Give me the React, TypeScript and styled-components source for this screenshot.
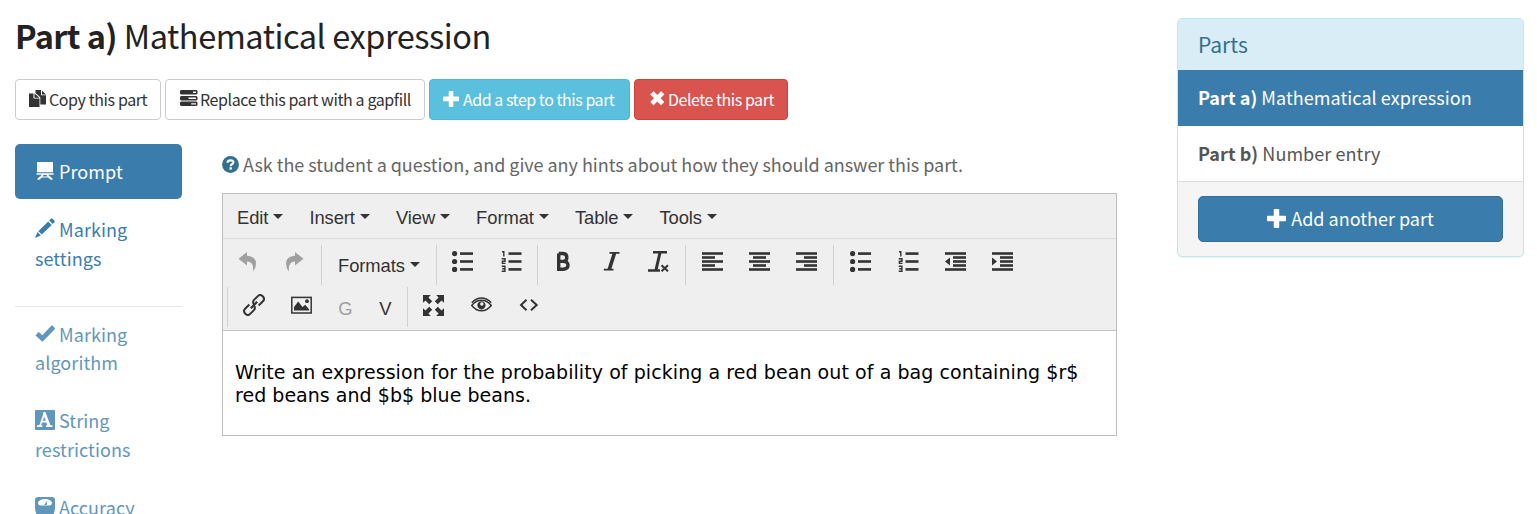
import React from "react";
import styled, { createGlobalStyle } from "styled-components";

const sans = `"Noto Sans CJK SC", "Noto Sans", sans-serif`;

const Global = createGlobalStyle`
  * { box-sizing: border-box; }
  html, body { margin: 0; background: #fff; }
  body { font-family: ${sans}; font-size: 18px; color: #333; overflow: hidden; }
`;

const Page = styled.div`
  display: flex;
  height: 514px;
  overflow: hidden;
  padding: 0 13px 0 15px;
  justify-content: space-between;
`;
const Main = styled.main`width: 1102px;`;
const Title = styled.h1`
  margin: 0;
  height: 79px;
  padding-top: 15px;
  font-size: 32.5px;
  line-height: 40px;
  font-weight: 400;
  color: #222;
  white-space: nowrap;
  letter-spacing: -0.45px;
  b { letter-spacing: -0.62px; }
`;
const Actions = styled.div`display: flex; gap: 4px; margin-bottom: 24px;`;
const tones = {
  plain: ["#fff", "#ccc", "#333"],
  info: ["#5bc0de", "#46b8da", "#fff"],
  danger: ["#d9534f", "#d43f3a", "#fff"],
};
const ActionButton = styled.button<{ $tone: keyof typeof tones; $w: number; $ls?: number; $gap?: number; $pad?: number }>`
  display: flex;
  align-items: center;
  width: ${(p) => p.$w}px;
  height: 41px;
  padding: 0 0 2px ${(p) => p.$pad ?? 13}px;
  font: 16px/24px ${sans};
  letter-spacing: ${(p) => p.$ls ?? -0.4}px;
  white-space: nowrap;
  border: 1px solid ${(p) => tones[p.$tone][1]};
  border-radius: 4px;
  background: ${(p) => tones[p.$tone][0]};
  color: ${(p) => tones[p.$tone][2]};
  svg { margin-right: ${(p) => p.$gap ?? 2}px; margin-top: 0; flex: none; }
`;
const Columns = styled.div`display: flex; gap: 40px;`;
const Nav = styled.nav`width: 167px; flex: none;`;
const NavItem = styled.a<{ $active?: boolean; $soft?: boolean }>`
  display: block;
  height: ${(p) => (p.$active ? 55 : 84.5)}px;
  margin-bottom: 2px;
  padding: ${(p) => (p.$active ? 13 : 14)}px 20px;
  border-radius: 5px;
  line-height: 28.6px;
  letter-spacing: 0.08px;
  background: ${(p) => (p.$active ? "#3a7dad" : "transparent")};
  color: ${(p) => (p.$active ? "#fff" : "#3a7dad")};
  opacity: ${(p) => (p.$soft ? 0.8 : 1)};
  svg { margin-right: 4px; vertical-align: -2px; overflow: visible; }
`;
const Rule = styled.hr`border: 0; border-top: 1px solid #e5e5e5; margin: 20px 0 -1px;`;
const Content = styled.section`width: 895px;`;
const Help = styled.p`
  display: flex;
  align-items: center;
  margin: 5px 0 15px;
  height: 29px;
  color: #666;
  white-space: nowrap;
  letter-spacing: -0.035px;
  svg { margin: 2px 4px 0 0; }
`;
const Editor = styled.div`border: 1px solid #bfbfbf; height: 243px; background: #fff;`;
const MenuBar = styled.div`
  display: flex;
  height: 45px;
  padding: 4px 0 0 14px;
  gap: 26px;
  align-items: center;
  background: #efefef;
  border-bottom: 1px solid #dcdcdc;
`;
const MenuLabel = styled.span`
  display: flex;
  align-items: center;
  font: 18.4px/24px "Liberation Sans", sans-serif;
  letter-spacing: -0.08px;
  color: #333;
  white-space: nowrap;
`;
const Caret = styled.i`
  width: 10px;
  margin: -4px 0 0 5px;
  border: 5px solid transparent;
  border-top-color: #333;
  border-bottom: 0;
`;
const Tools = styled.div`height: 92px; background: #efefef; border-bottom: 1px solid #c4c4c4; padding-top: 6px;`;
const ToolRow = styled.div<{ $indent?: boolean }>`
  display: flex;
  height: 40px;
  margin: 0 0 2px ${(p) => (p.$indent ? 4 : 0)}px;
  --tool-height: ${(p) => (p.$indent ? 36 : 32)}px;
`;
const Group = styled.div<{ $w: number; $pad: number; $first?: boolean }>`
  display: flex;
  width: ${(p) => p.$w}px;
  padding-left: ${(p) => p.$pad}px;
  border-left: ${(p) => (p.$first ? 0 : 1)}px solid #d2d2d2;
`;
const Tool = styled.span<{ $w: number; $dim?: boolean }>`
  display: flex;
  flex: none;
  width: ${(p) => p.$w}px;
  height: var(--tool-height);
  align-items: center;
  justify-content: center;
  color: ${(p) => (p.$dim ? "#a0a0a0" : "#333")};
`;
const Letter = styled.span`font: 18.4px/20px "Liberation Sans", sans-serif; padding: 8px 0 0 1px;`;
const FormatsLabel = styled(MenuLabel)`
  height: 42px;
  ${Caret} { margin-top: -3px; }
`;
const Body = styled.div`
  padding: 30px 12px;
  font: 19px/23px Verdana, "DejaVu Sans", sans-serif;
  color: #000;
  white-space: nowrap;
`;
const Line = styled.div<{ $ls: number }>`letter-spacing: ${(p) => p.$ls}px;`;

const Panel = styled.aside`
  width: 347px;
  height: 239px;
  margin-top: 18px;
  border: 1px solid #bce8f1;
  border-radius: 5px;
  overflow: hidden;
  background: #f5f5f5;
  box-shadow: 0 1px 1px rgba(0, 0, 0, 0.05);
`;
const PanelHead = styled.h3`
  margin: 0;
  height: 51px;
  padding: 0 20px;
  font-size: 21px;
  line-height: 50px;
  font-weight: 400;
  background: #d9edf7;
  color: #31708f;
`;
const PartRow = styled.div<{ $active?: boolean }>`
  height: 56px;
  padding: 0 20px;
  line-height: 54px;
  white-space: nowrap;
  letter-spacing: 0.06px;
  background: ${(p) => (p.$active ? "#3a7dad" : "#fff")};
  color: ${(p) => (p.$active ? "#fff" : "#555")};
  border-bottom: ${(p) => (p.$active ? 0 : 1)}px solid #ddd;
`;
const AddPart = styled.button`
  display: flex;
  align-items: center;
  justify-content: center;
  gap: 5px;
  width: 305px;
  height: 46px;
  margin: 14px 20px;
  padding: 0 0 2px;
  font: 18px/26px ${sans};
  color: #fff;
  background: #3a7dad;
  border: 1px solid #336f99;
  border-radius: 5px;
`;

type IconProps = { w: number; h: number; children: React.ReactNode; vb?: string };
const Icon = ({ w, h, vb, children }: IconProps) => (
  <svg width={w} height={h} viewBox={vb ?? `0 0 ${w} ${h}`} fill="currentColor" aria-hidden="true">{children}</svg>
);
const CopyIcon = () => (
  <Icon w={18} h={18}>
    <path d="M0 3.5H4.5V8.5H10.5V17H0ZM5.5 3.5L10.5 7.7H5.5Z" />
    <path d="M6.5 0H12V5.2H17V14.5H11.3V7.3L6.5 3ZM13 .5L17 4.4H13Z" />
  </Icon>
);
const TasksIcon = () => (
  <Icon w={18} h={18}>
    <path fillRule="evenodd" d="M1 0H16.5L17.5 1V3.5L16.5 4.4H1L0 3.5V1ZM13 1.6V2.9H16V1.6Z" />
    <path fillRule="evenodd" d="M1 6H16.5L17.5 7V9.5L16.5 10.4H1L0 9.5V7ZM8.5 7.6V8.9H16V7.6Z" />
    <path fillRule="evenodd" d="M1 11.6H16.5L17.5 12.6V15L16.5 16H1L0 15V12.6ZM11.2 13.2V14.5H16V13.2Z" />
  </Icon>
);
const PlusIcon = ({ s }: { s: number }) => (
  <Icon w={s} h={s} vb="0 0 16 16">
    <path d="M6.4 0H9.6Q10.3 0 10.3.7V5.6H15.3Q16 5.6 16 6.3V9.7Q16 10.3 15.3 10.3H10.3V15.3Q10.3 16 9.6 16H6.4Q5.7 16 5.7 15.3V10.3H.7Q0 10.3 0 9.7V6.3Q0 5.6.7 5.6H5.7V.7Q5.7 0 6.4 0Z" />
  </Icon>
);
const CrossIcon = () => (
  <Icon w={15} h={15}><path d="M3.5.5L7.3 4.2L11.1.5L14 3.4L10.3 7.2L14 11L11.1 13.9L7.3 10.2L3.5 13.9L.6 11L4.3 7.2L.6 3.4Z" stroke="currentColor" strokeLinejoin="round" strokeWidth=".6" /></Icon>
);
const BoardIcon = () => (
  <Icon w={20} h={20}>
    <path d="M2 1.5Q2 1 2.5 1H17.5Q18 1 18 1.5V11.2H2ZM1.5 12.2H18.5V13.7H13L17.5 17.4V18.8H15.6L12.9 16.6H7.1L4.5 18.8H2.6V17.4L7 13.7H1.5Z" />
    <path d="M8.4 14.1H11.6L12.4 15.4H7.6Z" fill="#3a7dad" />
  </Icon>
);
const PencilIcon = () => (
  <Icon w={20} h={20}><path transform="translate(0 -1)" d="M15.9.7Q16.7-.1 17.5.7L19.5 2.8Q20.2 3.5 19.5 4.2L17.7 5.9L14.2 2.4ZM13.2 3.4L16.7 6.9L6.8 16.6L3.3 13.2ZM2.5 14.1L5.9 17.5L0 20Z" /></Icon>
);
const CheckIcon = () => (
  <Icon w={20} h={20}><path d="M.8 11L3.3 8.3Q3.7 7.9 4.1 8.3L7.3 11.3L16.5 1.6Q17 1.2 17.4 1.6L20 4.2Q20.3 4.6 20 5L8 17.3Q7.4 17.8 6.8 17.3L.8 11.7Q.4 11.3.8 11Z" /></Icon>
);
const FontIcon = () => (
  <Icon w={20} h={20}>
    <rect width="20" height="20" rx=".8" />
    <path d="M4.8 16.2L9.5 3.4M6.8 11.7H12.5" stroke="#fff" strokeWidth="1.7" fill="none" />
    <path d="M9 2.2L14.3 16.3" stroke="#fff" strokeWidth="2.8" fill="none" />
    <path d="M2 16.2H7.4M11 16.2H17.4" stroke="#fff" strokeWidth="1.8" fill="none" />
  </Icon>
);
const ScaleIcon = () => (
  <Icon w={20} h={20}>
    <path fillRule="evenodd" d="M3 0H17Q20 0 20 3V12L18.5 18Q18 20 16 20H4Q2 20 1.5 18L0 12V3Q0 0 3 0ZM3 5.5Q3 8.3 6 8.6L14 8.6Q17 8.3 17 5.5Q15.5 2 10 2Q4.5 2 3 5.5Z" />
    <path d="M9.2 8L12.4 3.7L11.7 8Z" />
  </Icon>
);
const HelpIcon = () => (
  <Icon w={17} h={17}>
    <circle cx="8.5" cy="8.5" r="8.4" fill="#31708f" />
    <path d="M5.5 6.8Q5.5 4.3 8.6 4.3Q11.4 4.3 11.4 6.2Q11.4 7.5 9.9 8.2Q8.7 8.8 8.7 10.2" stroke="#fff" strokeWidth="2.2" fill="none" />
    <rect x="7.5" y="11.3" width="2.4" height="2.3" fill="#fff" />
  </Icon>
);
const UndoIcon = () => (
  <Icon w={21} h={21}><path d="M10 1V4.7Q19 5.2 19 12.5Q19 17 16 20.8Q17.2 10.4 10 10.5V14.5L1.5 7.8Z" /></Icon>
);
const RedoIcon = () => (
  <Icon w={21} h={21}><path d="M11 1V4.7Q2 5.2 2 12.5Q2 17 5 20.8Q3.8 10.4 11 10.5V14.5L19.5 7.8Z" /></Icon>
);
const BulletIcon = () => (
  <Icon w={21} h={21}>
    {[2.6, 10.5, 18.4].map((y) => <g key={y}><circle cx="2.6" cy={y} r="2.6" /><rect x="8" y={y - 1.3} width="13" height="2.6" /></g>)}
  </Icon>
);
const NumberIcon = () => (
  <Icon w={21} h={21}>
    {[2.6, 10.5, 18.4].map((y) => <rect key={y} x="7.5" y={y - 1.3} width="13" height="2.6" />)}
    <path d="M1 .7H2.8V5.6M.7 7.8H4V10.2H1.4V12.4H4.5M.7 15.2H3.9V20.3H.7M1.2 17.8H3.9" stroke="currentColor" strokeWidth="1.4" fill="none" />
  </Icon>
);
const BoldIcon = () => (
  <Icon w={21} h={21}><path d="M5.7 2.5V18.2H10Q15 18.2 15 14.1Q15 10.4 10 10.4H5.7M10 10.4Q13.8 10.4 13.8 6.5Q13.8 2.5 9.6 2.5H5.7" stroke="currentColor" strokeWidth="3.4" fill="none" /></Icon>
);
const ItalicIcon = () => (
  <Icon w={21} h={21}><path d="M8.5 1.9H18.5M2.8 18.6H12.5" stroke="currentColor" strokeWidth="1.7" /><path d="M13.6 1.7L8.2 18.8" stroke="currentColor" strokeWidth="3.6" /></Icon>
);
const ClearIcon = () => (
  <Icon w={21} h={21}>
    <path d="M5 1.3H19M0 19.5H12" stroke="currentColor" strokeWidth="2.4" />
    <path d="M12 1.5L8 19" stroke="currentColor" strokeWidth="3" />
    <path d="M13.5 14.2L20 20.3M20 14.2L13.5 20.3" stroke="currentColor" strokeWidth="2" />
  </Icon>
);
const Bars = ({ rows, arrow }: { rows: [number, number][]; arrow?: string }) => (
  <Icon w={21} h={21}>
    {rows.map(([x, w], i) => <rect key={i} x={x} y={1.2 + i * 4} width={w} height="2.6" />)}
    {arrow && <path d={arrow} />}
  </Icon>
);
const full: [number, number] = [0, 21];
const indented: [number, number][] = [full, [8, 13], [8, 13], [8, 13], full];
const LinkIcon = () => (
  <Icon w={22} h={22}>
    <g transform="rotate(-45 11 11)" fill="none" stroke="currentColor" strokeWidth="2">
      <path d="M8 7.4H2Q-1.3 7.4-1.3 11Q-1.3 14.6 2 14.6H7Q10.2 14.6 10.4 11.5" />
      <path d="M14 14.6H20Q23.3 14.6 23.3 11Q23.3 7.4 20 7.4H15Q11.8 7.4 11.6 10.5" />
      <path d="M6.5 11H15.5" strokeWidth="2.2" />
    </g>
  </Icon>
);
const ImageIcon = () => (
  <Icon w={21} h={18}>
    <rect x=".8" y="1.4" width="19.4" height="15.6" fill="none" stroke="currentColor" strokeWidth="1.5" />
    <path d="M3 14.6V11L7.2 5.4L11.5 11L14.2 8.8L18.2 13.5V14.6Z" /><circle cx="16" cy="5.2" r="1.9" />
  </Icon>
);
const ExpandIcon = () => (
  <Icon w={21} h={21}>
    {[0, 90, 180, 270].map((a) => <path key={a} transform={`rotate(${a} 10.5 10.5)`} d="M0 0H7.8L5.4 2.5L9.2 6.2L6.2 9.2L2.5 5.4L0 7.8Z" />)}
  </Icon>
);
const EyeIcon = () => (
  <Icon w={21} h={16}>
    <path d="M.7 8.5Q5 3.3 10.5 3.3T20.3 8.5Q16 13.8 10.5 13.8T.7 8.5Z" fill="none" stroke="currentColor" strokeWidth="1.4" />
    <path d="M.8 5.8Q5 1 10.5 1T20.2 5.8" fill="none" stroke="currentColor" strokeWidth="1.3" />
    <path fillRule="evenodd" d="M10.5 4.2A4.1 4.1 0 1 1 10.4 4.2ZM10.8 5.3A1.7 1.7 0 1 0 10.9 5.3Z" />
  </Icon>
);
const CodeIcon = () => (
  <Icon w={20} h={14}><path d="M7.5 1.7L2 7L7.5 12.3M12 1.7L17.7 7L12 12.3" fill="none" stroke="currentColor" strokeWidth="2" /></Icon>
);

export default function App() {
  return (
    <>
      <Global />
      <Page>
        <Main>
          <Title><b>Part a)</b> Mathematical expression</Title>
          <Actions>
            <ActionButton $tone="plain" $w={146}><CopyIcon /><span>Copy this part</span></ActionButton>
            <ActionButton $tone="plain" $w={260} $pad={14}><TasksIcon /><span>Replace this part with a gapfill</span></ActionButton>
            <ActionButton $tone="info" $w={201} $gap={4} $ls={-0.47}><PlusIcon s={16} /><span>Add a step to this part</span></ActionButton>
            <ActionButton $tone="danger" $w={154} $pad={14.5} $gap={3.5} $ls={-0.47}><CrossIcon /><span>Delete this part</span></ActionButton>
          </Actions>
          <Columns>
            <Nav>
              <NavItem $active><BoardIcon />Prompt</NavItem>
              <NavItem><PencilIcon />Marking<br />settings</NavItem>
              <Rule />
              <NavItem $soft><CheckIcon />Marking<br />algorithm</NavItem>
              <NavItem $soft><FontIcon />String<br />restrictions</NavItem>
              <NavItem $soft><ScaleIcon />Accuracy</NavItem>
            </Nav>
            <Content>
              <Help><HelpIcon /><span>Ask the student a question, and give any hints about how they should answer this part.</span></Help>
              <Editor>
                <MenuBar>
                  {["Edit", "Insert", "View", "Format", "Table", "Tools"].map((m) => <MenuLabel key={m}>{m}<Caret /></MenuLabel>)}
                </MenuBar>
                <Tools>
                  <ToolRow>
                    <Group $first $w={98} $pad={1}>
                      <Tool $w={47} $dim><UndoIcon /></Tool><Tool $w={47} $dim><RedoIcon /></Tool>
                    </Group>
                    <Group $w={115} $pad={16}><FormatsLabel>Formats<Caret /></FormatsLabel></Group>
                    <Group $w={101} $pad={1.5}>
                      <Tool $w={48}><BulletIcon /></Tool><Tool $w={49}><NumberIcon /></Tool>
                    </Group>
                    <Group $w={148} $pad={2}>
                      <Tool $w={47}><BoldIcon /></Tool><Tool $w={48}><ItalicIcon /></Tool><Tool $w={47}><ClearIcon /></Tool>
                    </Group>
                    <Group $w={148} $pad={3}>
                      <Tool $w={47}><Bars rows={[full, [0, 13], full, [0, 13], full]} /></Tool>
                      <Tool $w={47}><Bars rows={[full, [4, 13], full, [4, 13], full]} /></Tool>
                      <Tool $w={47}><Bars rows={[full, [8, 13], full, [8, 13], full]} /></Tool>
                    </Group>
                    <Group $w={220} $pad={3}>
                      <Tool $w={47}><BulletIcon /></Tool><Tool $w={48}><NumberIcon /></Tool>
                      <Tool $w={47}><Bars rows={indented} arrow="M5 6.5V14.5L0 10.5Z" /></Tool>
                      <Tool $w={47}><Bars rows={indented} arrow="M0 6.5V14.5L5 10.5Z" /></Tool>
                    </Group>
                  </ToolRow>
                  <ToolRow $indent>
                    <Group $w={180} $pad={1.5}>
                      <Tool $w={48}><LinkIcon /></Tool><Tool $w={47}><ImageIcon /></Tool>
                      <Tool $w={41} $dim><Letter>G</Letter></Tool><Tool $w={39}><Letter>V</Letter></Tool>
                    </Group>
                    <Group $w={180} $pad={1.5}>
                      <Tool $w={48}><ExpandIcon /></Tool><Tool $w={48}><EyeIcon /></Tool><Tool $w={46}><CodeIcon /></Tool>
                    </Group>
                  </ToolRow>
                </Tools>
                <Body>
                  <Line $ls={0.072}>Write an expression for the probability of picking a red bean out of a bag containing $r$</Line>
                  <Line $ls={0.03}>red beans and $b$ blue beans.</Line>
                </Body>
              </Editor>
            </Content>
          </Columns>
        </Main>
        <Panel>
          <PanelHead>Parts</PanelHead>
          <PartRow $active><b>Part a)</b> Mathematical expression</PartRow>
          <PartRow><b>Part b)</b> Number entry</PartRow>
          <AddPart><PlusIcon s={19} /><span>Add another part</span></AddPart>
        </Panel>
      </Page>
    </>
  );
}
